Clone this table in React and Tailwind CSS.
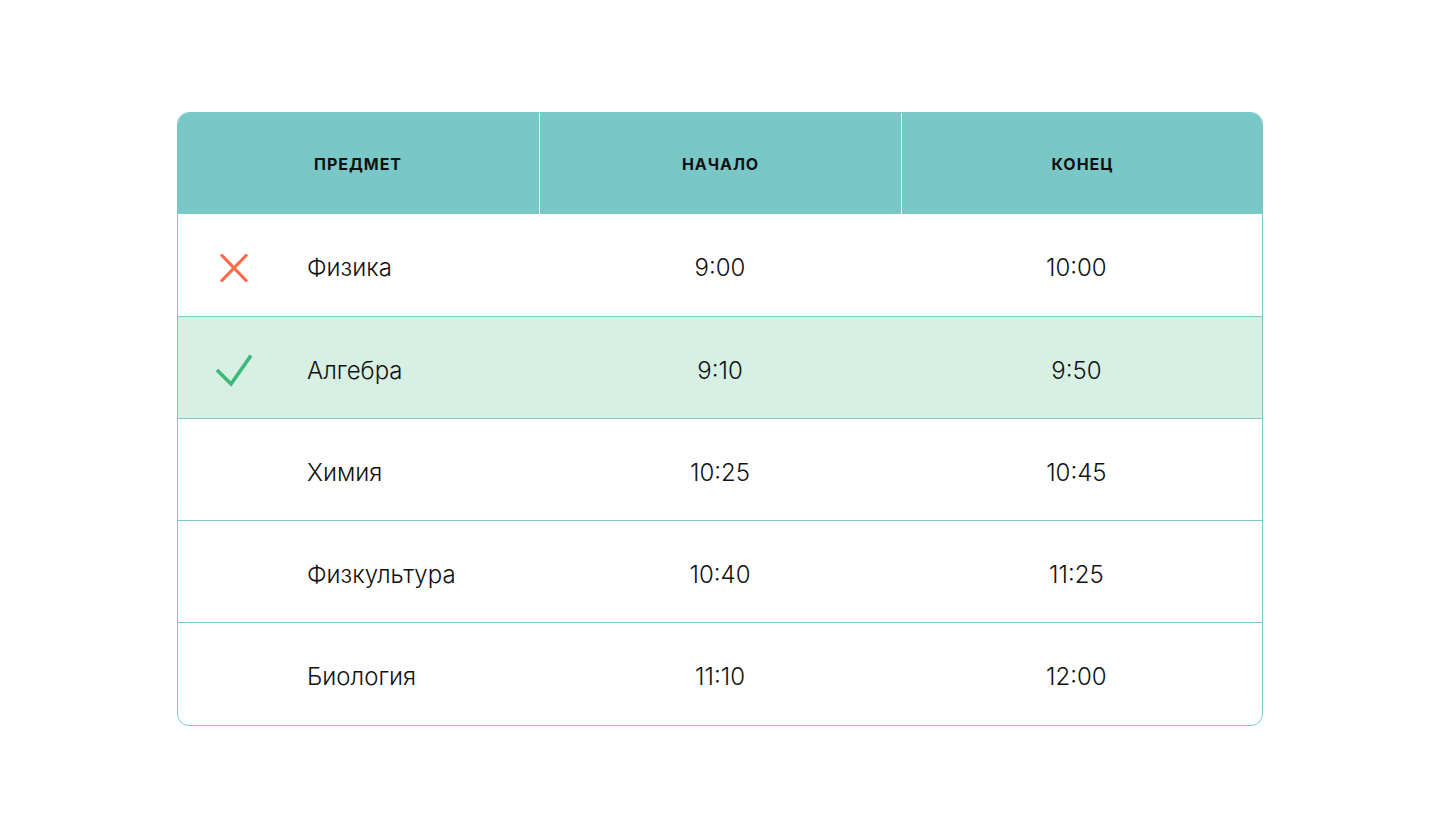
import React from "react";

const rows = [
  { name: "Физика", start: "9:00", end: "10:00", status: "x" },
  { name: "Алгебра", start: "9:10", end: "9:50", status: "ok" },
  { name: "Химия", start: "10:25", end: "10:45" },
  { name: "Физкультура", start: "10:40", end: "11:25" },
  { name: "Биология", start: "11:10", end: "12:00" },
];

function XIcon() {
  return (
    <svg width="30" height="30" viewBox="0 0 30 30" fill="none">
      <path d="M2 1.5L28 28.5M28 1.5L2 28.5" stroke="#FF6B4A" strokeWidth="3.2" />
    </svg>
  );
}

function CheckIcon() {
  return (
    <svg width="38" height="34" viewBox="0 0 38 34" fill="none">
      <path d="M2 16L16 30L36 1.5" stroke="#3CB878" strokeWidth="3.6" />
    </svg>
  );
}

export default function App() {
  return (
    <div className="w-[1440px] h-[832px] bg-white flex justify-center pt-[112px]" style={{ fontFamily: "Inter, 'Noto Sans', sans-serif" }}>
      <div className="w-[1086px] h-[614px] rounded-[12px] border border-[#7CCACA] overflow-hidden flex flex-col">
        <div className="grid grid-cols-3 h-[102px] bg-[#79C7C7] text-[16px] font-bold tracking-[0.06em] text-[#111] shrink-0 -mx-px -mt-px">
          <div className="flex items-center justify-center pt-[2px]">ПРЕДМЕТ</div>
          <div className="flex items-center justify-center pt-[2px] border-l border-white">НАЧАЛО</div>
          <div className="flex items-center justify-center pt-[2px] border-l border-white">КОНЕЦ</div>
        </div>
        {rows.map((r, i) => (
          <div
            key={i}
            className={`grid grid-cols-3 h-[102px] shrink-0 items-center pt-[6px] text-[24px] font-light text-[#111] ${i > 0 ? "border-t border-[#7CCACA]" : ""} ${r.status === "ok" ? "bg-[#D6F0E3]" : ""}`}
          >
            <div className="flex items-center pl-[37px]">
              <div className="w-[38px] h-[34px] flex items-center justify-center">
                {r.status === "x" && <XIcon />}
                {r.status === "ok" && <CheckIcon />}
              </div>
              <span className="ml-[54px]">{r.name}</span>
            </div>
            <div className="flex justify-center">{r.start}</div>
            <div className="flex justify-center pr-[10px]">{r.end}</div>
          </div>
        ))}
      </div>
    </div>
  );
}
